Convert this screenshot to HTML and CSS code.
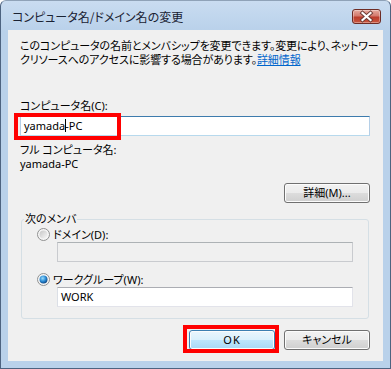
FILE: index.html
```html
<!DOCTYPE html>
<html lang="ja">
<head>
    <meta charset="UTF-8">
    <meta name="viewport" content="width=device-width, initial-scale=1.0">
    <title>コンピュータ名/ドメイン名の変更</title>
    <link rel="stylesheet" href="styles.css">
</head>
<body>
    <div class="window">
        <div class="titlebar">
            <span class="title">コンピュータ名/ドメイン名の変更</span>
            <button class="close-btn" aria-label="閉じる">
                <svg width="27" height="13" viewBox="0 0 27 13">
                    <path d="M9.5 3 L17.5 10 M17.5 3 L9.5 10" stroke="#6a3a34" stroke-width="4" stroke-linecap="square"/>
                    <path d="M9.5 3 L17.5 10 M17.5 3 L9.5 10" stroke="#fff" stroke-width="2.2" stroke-linecap="square"/>
                </svg>
            </button>
        </div>

        <div class="client">
            <p class="intro">このコンピュータの名前とメンバシップを変更できます。変更により、ネットワー<br>クリソースへのアクセスに影響する場合があります。<a href="#" class="link">詳細情報</a></p>

            <div class="field-label name-label">コンピュータ名(C):</div>
            <div class="textbox focused">yamada<span class="caret"></span>-PC</div>

            <div class="field-label full-label">フル コンピュータ名:</div>
            <div class="field-label">yamada-PC</div>

            <div class="more-row">
                <button class="btn">詳細(M)...</button>
            </div>

            <fieldset class="group">
                <legend>次のメンバ</legend>
                <div class="radio-row">
                    <svg class="radio" width="13" height="13" viewBox="0 0 13 13">
                        <defs>
                            <linearGradient id="radio-off" x1="0" y1="0" x2="1" y2="1">
                                <stop offset="0" stop-color="#c6c6c6"/>
                                <stop offset="1" stop-color="#f8f8f8"/>
                            </linearGradient>
                        </defs>
                        <circle cx="6.5" cy="6.5" r="6" fill="#f6f6f6" stroke="#8f9090"/>
                        <circle cx="6.5" cy="6.5" r="4" fill="url(#radio-off)"/>
                    </svg>
                    <span>ドメイン(D):</span>
                </div>
                <div class="textbox disabled"></div>

                <div class="radio-row second">
                    <svg class="radio" width="13" height="13" viewBox="0 0 13 13">
                        <defs>
                            <radialGradient id="radio-dot" cx="0.4" cy="0.35" r="0.7">
                                <stop offset="0" stop-color="#9adcfb"/>
                                <stop offset="0.55" stop-color="#2a8ad4"/>
                                <stop offset="1" stop-color="#0d3f7a"/>
                            </radialGradient>
                        </defs>
                        <circle cx="6.5" cy="6.5" r="6" fill="#f6f6f6" stroke="#8f9090"/>
                        <circle cx="6.5" cy="6.5" r="4" fill="url(#radio-dot)"/>
                    </svg>
                    <span>ワークグループ(W):</span>
                </div>
                <div class="textbox">WORK</div>
            </fieldset>

            <div class="actions">
                <button class="btn default">OK</button>
                <button class="btn">キャンセル</button>
            </div>

            <!-- red highlight marks drawn over the dialog -->
            <span class="mark mark-name"></span>
            <span class="mark mark-ok"></span>
        </div>
    </div>
</body>
</html>
```

FILE: styles.css
```css
* {
    box-sizing: border-box;
}

body {
    margin: 0;
    background: #fff;
    font-family: "Noto Sans", "Noto Sans CJK JP", sans-serif;
    font-size: 11px;
    font-feature-settings: "palt";
    color: #000;
}

/* window frame */
.window {
    width: 391px;
    height: 369px;
    border: 1px solid #4d6380;
    border-top-color: #8fa2b8;
    border-radius: 6px 6px 0 0;
    background: linear-gradient(#c9dcf1, #b9d1ea 30px);
    padding: 0 7px 7px;
    display: flex;
    flex-direction: column;
}

.titlebar {
    height: 29px;
    padding: 2px 2px 0 4px;
    display: flex;
    align-items: center;
    justify-content: space-between;
}

.title {
    font-family: "Noto Sans CJK JP", sans-serif;
    font-size: 12px;
    color: #1a2233;
    white-space: nowrap;
}

.close-btn {
    width: 29px;
    height: 15px;
    padding: 0;
    border: 1px solid #6e2c25;
    border-radius: 3px;
    background: linear-gradient(#e6aa9f 0%, #d47a6d 45%, #bb3c2c 55%, #c9573f 100%);
    box-shadow: inset 0 0 0 1px rgba(255, 255, 255, 0.35);
    display: flex;
    align-items: center;
    justify-content: center;
}

/* dialog body */
.client {
    flex: 1;
    position: relative;
    background: #f0f0f0;
    padding: 9px 13px 0 12px;
}

.intro {
    margin: 0;
    line-height: 14px;
    letter-spacing: -0.1px;
    white-space: nowrap;
}

.link {
    color: #0066cc;
}

.field-label {
    line-height: 14px;
    white-space: nowrap;
}

.name-label {
    margin-top: 32px;
}

.full-label {
    margin-top: 7px;
}

.textbox {
    height: 20px;
    margin-top: 3px;
    padding: 0 3px;
    line-height: 18px;
    background: #fff;
    border: 1px solid #e2e3ea;
    border-top-color: #abadb3;
    border-left-color: #dbdfe6;
    white-space: nowrap;
}

.textbox.focused {
    border-color: #b5cfe7;
    border-top-color: #3d7bad;
    border-bottom-color: #b7d9ed;
}

.textbox.disabled {
    background: #f0f0f0;
    border-color: #c9cbcf;
    border-top-color: #adb2b5;
}

.caret {
    display: inline-block;
    width: 1px;
    height: 13px;
    margin-right: -1px;
    background: #000;
    vertical-align: -2px;
}

.more-row {
    margin-top: 12px;
    display: flex;
    justify-content: flex-end;
}

/* buttons */
.btn {
    width: 86px;
    height: 20px;
    padding: 0;
    font: inherit;
    line-height: 18px;
    color: #000;
    border: 1px solid #707070;
    border-radius: 3px;
    background: linear-gradient(#f2f2f2 0%, #ebebeb 50%, #dddddd 50%, #cfcfcf 100%);
    box-shadow: inset 0 0 0 1px #fcfcfc;
}

.btn.default {
    border-color: #3c7fb1;
    background: linear-gradient(#eaf6fd 0%, #d9f0fc 50%, #bee6fd 50%, #a7d9f5 100%);
    letter-spacing: 1px;
}

/* member group */
.group {
    margin: 9px 1px 0;
    padding: 1px 15px 11px 15px;
    border: 1px solid #d5dfe5;
    border-radius: 3px;
    min-width: 0;
}

.group legend {
    margin-left: -13px;
    padding: 0 1px;
    line-height: 14px;
}

.radio-row {
    display: flex;
    align-items: center;
    gap: 3px;
    height: 14px;
    white-space: nowrap;
}

.radio-row.second {
    margin-top: 10px;
}

.group .textbox {
    margin: 1px 0 0 20px;
    padding-left: 3px;
}

.actions {
    margin-top: 11px;
    display: flex;
    justify-content: flex-end;
    gap: 9px;
}

/* red annotation boxes */
.mark {
    position: absolute;
    border: 4px solid #ff0000;
}

.mark-name {
    left: 6px;
    top: 83px;
    width: 107px;
    height: 27px;
}

.mark-ok {
    left: 175px;
    top: 295px;
    width: 96px;
    height: 28px;
}
```
